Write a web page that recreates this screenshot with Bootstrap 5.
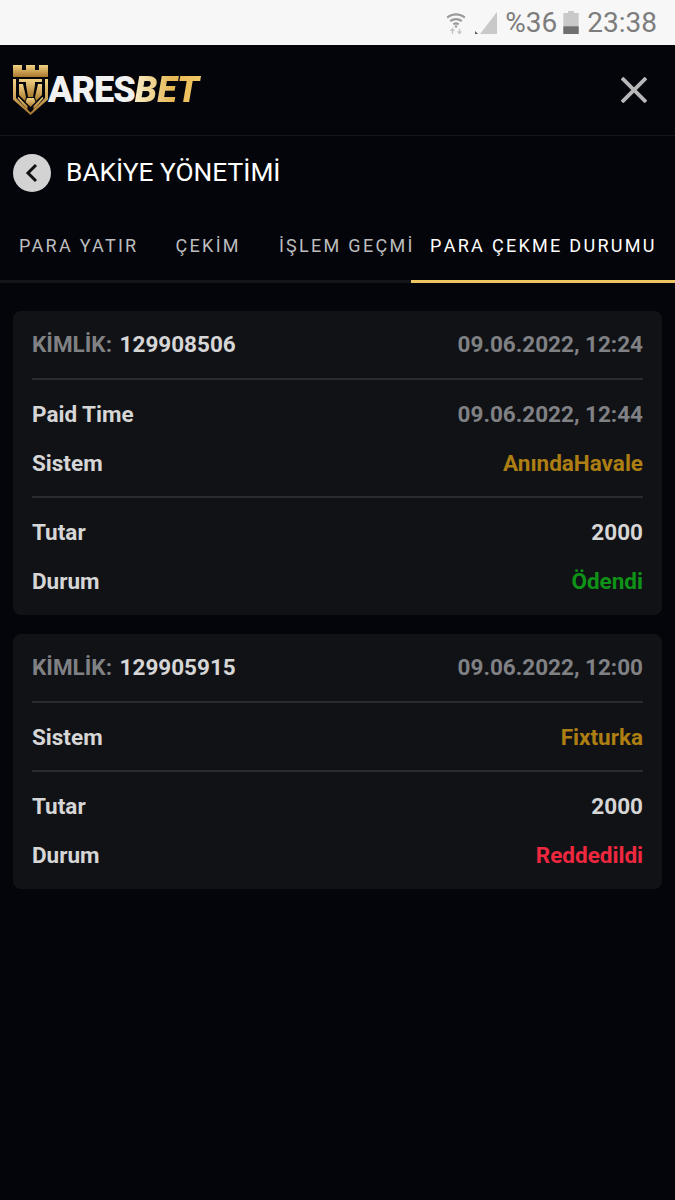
<!DOCTYPE html>
<html lang="tr">
  <head>
    <meta charset="UTF-8" />
    <meta name="viewport" content="width=device-width, initial-scale=1.0" />
    <title>Bakiye Yönetimi</title>
    <link href="https://cdn.jsdelivr.net/npm/bootstrap@5.3.2/dist/css/bootstrap.min.css" rel="stylesheet">
    <style>
      body {
        background-color: #04050a;
        font-family: Roboto, sans-serif;
        min-height: 1200px;
      }

      .status-bar {
        height: 45px;
        background-color: #f7f7f7;
        color: #7d7d7d;
        font-size: 28px;
        padding-right: 18px;
      }

      .status-battery { margin-left: 6px; }

      .top-bar {
        height: 91px;
        padding: 0 28px 0 13px;
        border-bottom: 1px solid #15161a;
      }

      .logo-text {
        font-family: Roboto, sans-serif;
        font-size: 36px;
        font-weight: 900;
        letter-spacing: -1px;
        line-height: 1;
        color: #f1f1f1;
      }

      .logo-gold {
        font-style: italic;
        letter-spacing: 0;
        background: linear-gradient(90deg, #f8ecc4, #e6b755 55%, #f3cb66);
        -webkit-background-clip: text;
        background-clip: text;
        color: transparent;
        padding-right: 4px;
      }

      .title-row {
        padding: 18px 13px 0;
        height: 75px;
        gap: 15px;
        color: #fff;
        font-size: 26.300px;
        line-height: 36px;
      }

      .back-circle {
        width: 38px;
        height: 38px;
        background-color: #d3d3d4;
      }

      .tab-bar {
        height: 72px;
        border-bottom: 3px solid #15161a;
        margin-bottom: 28px;
      }

      .tab-item {
        color: #bdbdbf;
        font-size: 18px;
        font-kerning: none;
        letter-spacing: 2.300px;
        line-height: 69px;
        height: 72px;
        white-space: nowrap;
        flex-shrink: 0;
      }

      .tab-first { margin-left: 19px; font-kerning: normal; }
      .tab-second { margin-left: 37px; }
      .tab-third { margin-left: 38px; margin-right: -12px; }

      .tab-active {
        color: #fff;
        border-bottom: 3px solid #eec561;
        padding: 0 0 0 19px;
        width: 264px;
        margin-left: auto;
      }

      .bet-card {
        background-color: #111216;
        border-radius: 8px;
        margin: 0 13px 19px;
        padding: 0 19px;
        font-size: 22.500px;
        font-weight: 700;
        color: #d6d6d6;
      }

      .line-row {
        height: 49px;
      }

      .card-head {
        height: 69px;
        border-bottom: 2px solid #2a2b2f;
      }

      .head-label { margin-right: 2px; }

      .group-row {
        padding: 10px 0 8px;
        border-bottom: 2px solid #2a2b2f;
      }

      .group-last {
        border-bottom: 0;
        padding-bottom: 9px;
      }

      .text-dim { color: #808184; }
      .text-system { color: #ad7f12; }
      .text-paid { color: #0f9317; }
      .text-refused { color: #f0283f; }
    </style>
  </head>
  <body>
    <div class="status-bar d-flex justify-content-end align-items-center">
      <svg width="22" height="23" viewBox="0 0 24 26" fill="none" stroke="#9b9b9b" stroke-width="2.400">
        <path d="M2 7.500c5.500-5 14.500-5 20 0M5.500 11.500c3.500-3 9.500-3 13 0M9 15c1.800-1.300 4.200-1.300 6 0" />
        <circle cx="12" cy="17.500" r="1" fill="#9b9b9b" stroke-width="1" />
        <path d="M8 26v-5M5.800 22.500L8 20l2.200 2.500M16 20v5M13.800 23L16 25.500l2.200-2.500" stroke="#c4c4c4" stroke-width="1.500" />
      </svg>
      <svg class="ms-2" width="22" height="22" viewBox="0 0 22 22">
        <path d="M22 0v22H5z" fill="#c9c9c9" />
        <path d="M0 22v-3l3 3z" fill="#555" />
      </svg>
      <span class="ms-2">%36</span>
      <svg class="status-battery" width="16" height="23" viewBox="0 0 16 24">
        <path d="M5 0h6v2h5v22H0V2h5z" fill="#c9c9c9" />
        <path d="M0 16h16v8H0z" fill="#6f6f6f" />
      </svg>
      <span class="ms-2">23:38</span>
    </div>

    <div class="top-bar d-flex justify-content-between align-items-center">
      <div class="d-flex align-items-center">
        <svg width="35" height="50" viewBox="0 0 35 50">
          <defs>
            <linearGradient id="goldFill" x1="0" y1="0" x2="0" y2="1">
              <stop offset="0" stop-color="#f3d284" />
              <stop offset="1" stop-color="#a8772c" />
            </linearGradient>
          </defs>
          <g fill="url(#goldFill)">
            <path d="M0 0h9v5h4V0h9v5h4V0h9v12H0z" />
            <path d="M0 14h3v19l14.500 14.500L32 33V14h3v20.500L17.500 50 0 34.500z" />
            <path d="M6 14h23v3h-7v3l-2 12h-5l-2-12v-3H6z" />
            <path d="M6 19h4l3 13-1 4-6-6zM29 19h-4l-3 13 1 4 6-6z" />
            <path d="M4.500 33l1-1 9 9v4zM30.500 33l-1-1-9 9v4z" />
            <path d="M14 33h7l1.500 4-5 5-5-5z" />
          </g>
        </svg>
        <div class="logo-text">ARES<span class="logo-gold">BET</span></div>
      </div>
      <svg width="26" height="26" viewBox="0 0 26 26" stroke="#b7b7b9" stroke-width="3.800" aria-label="Kapat">
        <path d="M1 1l24 24M25 1L1 25" />
      </svg>
    </div>

    <div class="title-row d-flex align-items-start">
      <div class="back-circle rounded-circle d-flex justify-content-center align-items-center">
        <svg width="14" height="20" viewBox="0 0 14 20" fill="none" stroke="#111" stroke-width="3">
          <path d="M11 2L3 10l8 8" />
        </svg>
      </div>
      <div>BAKİYE YÖNETİMİ</div>
    </div>

    <div class="tab-bar d-flex">
      <div class="tab-item tab-first">PARA YATIR</div>
      <div class="tab-item tab-second">ÇEKİM</div>
      <div class="tab-item tab-third">İŞLEM GEÇMİ</div>
      <div class="tab-item tab-active">PARA ÇEKME DURUMU</div>
    </div>

    <div class="bet-card">
      <div class="card-head d-flex justify-content-between align-items-center">
        <div><span class="text-dim head-label">KİMLİK:</span> 129908506</div>
        <div class="text-dim">09.06.2022, 12:24</div>
      </div>
      <div class="group-row">
        <div class="line-row d-flex justify-content-between align-items-center">
          <span>Paid Time</span><span class="text-dim">09.06.2022, 12:44</span>
        </div>
        <div class="line-row d-flex justify-content-between align-items-center">
          <span>Sistem</span><span class="text-system">AnındaHavale</span>
        </div>
      </div>
      <div class="group-row group-last">
        <div class="line-row d-flex justify-content-between align-items-center">
          <span>Tutar</span><span>2000</span>
        </div>
        <div class="line-row d-flex justify-content-between align-items-center">
          <span>Durum</span><span class="text-paid">Ödendi</span>
        </div>
      </div>
    </div>

    <div class="bet-card">
      <div class="card-head d-flex justify-content-between align-items-center">
        <div><span class="text-dim head-label">KİMLİK:</span> 129905915</div>
        <div class="text-dim">09.06.2022, 12:00</div>
      </div>
      <div class="group-row">
        <div class="line-row d-flex justify-content-between align-items-center">
          <span>Sistem</span><span class="text-system">Fixturka</span>
        </div>
      </div>
      <div class="group-row group-last">
        <div class="line-row d-flex justify-content-between align-items-center">
          <span>Tutar</span><span>2000</span>
        </div>
        <div class="line-row d-flex justify-content-between align-items-center">
          <span>Durum</span><span class="text-refused">Reddedildi</span>
        </div>
      </div>
    </div>

    <script src="https://cdn.jsdelivr.net/npm/bootstrap@5.3.2/dist/js/bootstrap.bundle.min.js"></script>
  </body>
</html>
